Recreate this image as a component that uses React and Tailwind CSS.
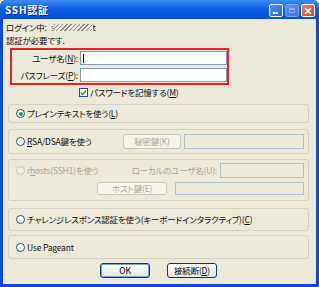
import React from "react";

const jp = "font-['Tahoma','Noto_Sans_CJK_JP',sans-serif] [font-feature-settings:'palt']";

const Radio = ({ checked, disabled }) => (
  <span
    className={`inline-flex shrink-0 items-center justify-center w-[9px] h-[9px] rounded-full border ${
      disabled ? "border-[#CAC8BB] bg-[#F0EEE4]" : "border-[#1C5180] bg-white"
    }`}
  >
    {checked && <span className="w-[4px] h-[4px] rounded-full bg-[#21A121]" />}
  </span>
);

const U = ({ children }) => <span className="underline underline-offset-1">{children}</span>;

const XpButton = ({ children, width, disabled, isDefault }) => (
  <div
    className={`flex items-center justify-center h-full rounded-[3px] border ${width} ${
      disabled
        ? "border-[#C9C7BA] bg-[#F5F4EA] text-[#ACA899]"
        : "border-[#003C74] bg-gradient-to-b from-white to-[#E6E5DE] text-black"
    } ${isDefault ? "shadow-[inset_0_0_0_1px_#7BA2E7]" : ""}`}
  >
    {children}
  </div>
);

const Field = ({ width, disabled }) => (
  <div
    className={`h-full border ${width} ${
      disabled ? "border-[#AFC3D8] bg-[#ECE9D8]" : "border-[#7F9DB9] bg-white"
    }`}
  />
);

const Group = ({ className, children }) => (
  <div className={`ml-[5px] w-[301px] rounded-[3px] border border-[#D5D2C2] ${className}`}>
    {children}
  </div>
);

export default function App() {
  return (
    <div className={`w-[319px] h-[287px] bg-white text-[8.5px] leading-none tracking-[-0.2px] text-[#111] ${jp}`}>
      <div className="flex flex-col w-[319px] h-[287px] rounded-t-[6px] overflow-hidden bg-[#0A48D8]">
        {/* Title bar */}
        <div className="flex items-center justify-between h-[19px] pl-[5px] pr-[4px] bg-gradient-to-b from-[#3C8DF8] via-[#0A5BE6] to-[#0450D6]">
          <span className="text-white font-bold text-[10px] tracking-[0.8px] [text-shadow:1px_1px_0_#0A2A8C]">
            SSH認証
          </span>
          <div className="flex items-center gap-[2px] mt-[2px]">
            <div className="relative w-[14px] h-[13px] rounded-[2px] border border-white bg-gradient-to-br from-[#5A95F7] to-[#2560E0]">
              <span className="absolute left-[3px] bottom-[2px] w-[5px] h-[2px] bg-white" />
            </div>
            <div className="relative w-[14px] h-[13px] rounded-[2px] border border-[#9BB7F0] bg-gradient-to-br from-[#6E9FEE] to-[#4B7FE2] opacity-80">
              <span className="absolute left-[3px] top-[3px] w-[6px] h-[5px] border border-[#A8C2F2] border-t-2" />
            </div>
            <div className="flex items-center justify-center w-[14px] h-[13px] rounded-[2px] border border-white bg-gradient-to-br from-[#E8836A] to-[#C9401C]">
              <svg width="8" height="8" viewBox="0 0 8 8">
                <path d="M1 1L7 7M7 1L1 7" stroke="white" strokeWidth="1.6" />
              </svg>
            </div>
          </div>
        </div>

        {/* Body */}
        <div className="flex-1 mx-[3px] mb-[3px] bg-[#ECE9D8] pt-[2px]">
          <div className="flex items-center h-[13px] pl-[3px]">
            <span>ログイン中:</span>
            <span className="ml-[4px] text-[#777]">s</span>
            <span className="w-[38px] h-[7px] bg-[repeating-linear-gradient(135deg,#8a8a8a_0_1px,transparent_1px_3px)]" />
            <span>t</span>
          </div>
          <div className="flex items-center h-[13px] pl-[3px]">認証が必要です.</div>

          {/* Highlighted credentials */}
          <div className="mt-[1px] ml-[7px] w-[219px] h-[37px] border-2 border-[#EE1C24]">
            <div className="flex items-center mt-[1px] h-[14px]">
              <span className="w-[66px] text-right">
                ユーザ名(<U>N</U>):
              </span>
              <div className="flex-1 h-full ml-[2px] border border-[#7F9DB9] bg-white pl-[2px] flex items-center">
                <span className="w-px h-[9px] bg-black" />
              </div>
            </div>
            <div className="flex items-center mt-[3px] h-[14px]">
              <span className="w-[66px] text-right">
                パスフレーズ(<U>P</U>):
              </span>
              <div className="flex-1 h-full ml-[2px] border border-[#7F9DB9] bg-white" />
            </div>
          </div>

          <div className="flex items-center h-[12px] mt-[1px] ml-[76px] gap-[2px]">
            <span className="flex items-center justify-center w-[9px] h-[9px] border border-[#1C5180] bg-white">
              <svg width="7" height="7" viewBox="0 0 7 7">
                <path d="M1 3.5L2.8 5.3L6 1.5" stroke="#21A121" strokeWidth="1.5" fill="none" />
              </svg>
            </span>
            <span>
              パスワードを記憶する(<U>M</U>)
            </span>
          </div>

          <Group className="mt-[6px] h-[19px] flex items-center pl-[7px]">
            <Radio checked />
            <span className="ml-[2px]">
              プレインテキストを使う(<U>L</U>)
            </span>
          </Group>

          <Group className="mt-[6px] h-[25px] flex items-center pl-[7px] pr-[4px]">
            <div className="flex items-center w-[107px]">
              <Radio />
              <span className="ml-[2px]">
                <U>R</U>SA/DSA鍵を使う
              </span>
            </div>
            <div className="h-[15px] flex">
              <XpButton width="w-[58px]" disabled>
                秘密鍵(K)
              </XpButton>
            </div>
            <div className="h-[15px] ml-[3px] flex">
              <Field width="w-[120px]" disabled />
            </div>
          </Group>

          <Group className="mt-[5px] h-[42px] pl-[7px] pr-[4px] pt-[3px] text-[#ACA899]">
            <div className="flex items-center h-[15px]">
              <div className="flex items-center flex-1">
                <Radio disabled />
                <span className="ml-[2px]">
                  r<U>h</U>osts(SSH1)を使う
                </span>
              </div>
              <span className="mr-[3px]">ローカルのユーザ名(U):</span>
              <Field width="w-[84px]" disabled />
            </div>
            <div className="flex items-center justify-end h-[13px] mt-[4px]">
              <XpButton width="w-[70px]" disabled>
                ホスト鍵(E)
              </XpButton>
              <div className="ml-[8px] h-full flex">
                <Field width="w-[129px]" disabled />
              </div>
            </div>
          </Group>

          <Group className="mt-[7px] h-[23px] flex items-center pl-[7px]">
            <Radio />
            <span className="ml-[2px]">
              チャレンジレスポンス認証を使う(キーボードインタラクティブ)(<U>C</U>)
            </span>
          </Group>

          <Group className="mt-[4px] h-[24px] flex items-center pl-[7px]">
            <Radio />
            <span className="ml-[2px]">
              Use Pa<U>g</U>eant
            </span>
          </Group>

          <div className="flex h-[15px] mt-[4px] ml-[97px] gap-[17px]">
            <XpButton width="w-[50px]" isDefault>
              OK
            </XpButton>
            <XpButton width="w-[50px]">
              接続断(<U>D</U>)
            </XpButton>
          </div>
        </div>
      </div>
    </div>
  );
}
